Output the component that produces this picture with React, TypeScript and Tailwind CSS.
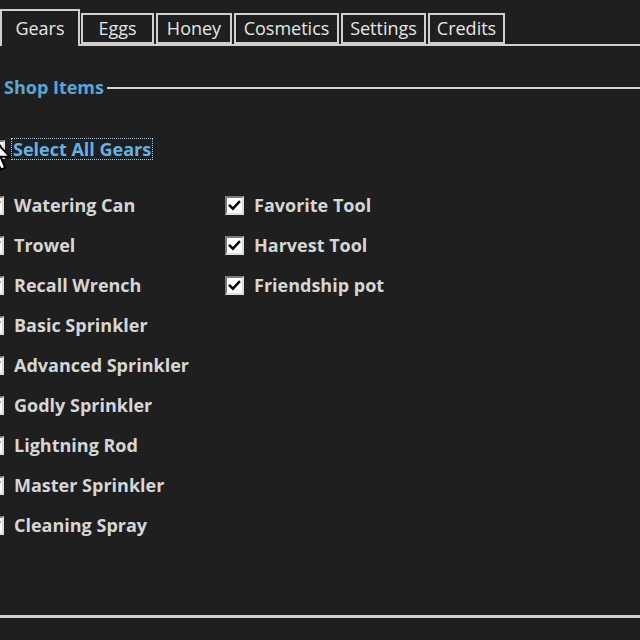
import type { ReactNode } from "react";

const TABS = [
  { label: "Eggs", width: "w-[73px]" },
  { label: "Honey", width: "w-[76px]" },
  { label: "Cosmetics", width: "w-[105px]" },
  { label: "Settings", width: "w-[85px]" },
  { label: "Credits", width: "w-[77px]" },
];

const LEFT_ITEMS = [
  "Watering Can",
  "Trowel",
  "Recall Wrench",
  "Basic Sprinkler",
  "Advanced Sprinkler",
  "Godly Sprinkler",
  "Lightning Rod",
  "Master Sprinkler",
  "Cleaning Spray",
];

const RIGHT_ITEMS = ["Favorite Tool", "Harvest Tool", "Friendship pot"];

function CheckBox() {
  return (
    <span className="flex h-[19px] w-[19px] shrink-0 items-center justify-center border-2 border-t-[#7a7a7a] border-l-[#7a7a7a] border-r-[#dcdcdc] border-b-[#dcdcdc] bg-white">
      <svg viewBox="0 0 14 14" className="h-[13px] w-[13px]">
        <path
          d="M2 7.2 L5.3 10.4 L12 3.2"
          fill="none"
          stroke="#000"
          strokeWidth="2.6"
          strokeLinecap="square"
        />
      </svg>
    </span>
  );
}

function CheckRow({ children }: { children: ReactNode }) {
  return (
    <label className="flex h-[40px] items-center gap-[10px]">
      <CheckBox />
      <span className="font-bold text-[18px] text-[#d6d6d6]">{children}</span>
    </label>
  );
}

function Cursor() {
  return (
    <svg
      viewBox="0 0 12 19"
      className="pointer-events-none absolute -left-[12px] top-[134px] h-[38px] w-[24px]"
    >
      <path
        d="M0.5 0.5 L0.5 15.5 L4 12.2 L6.4 17.8 L8.6 16.8 L6.3 11.4 L11 11.4 Z"
        fill="#fff"
        stroke="#000"
        strokeWidth="1"
        strokeLinejoin="miter"
      />
    </svg>
  );
}

export default function App() {
  return (
    <div
      className="relative h-[640px] w-[640px] overflow-hidden bg-[#1f1f1f]"
      style={{ fontFamily: '"Open Sans", "Noto Sans", sans-serif' }}
    >
      {/* tab strip */}
      <div className="flex h-[46px] items-end">
        <div className="flex h-[37px] w-[80px] items-start justify-center border-x-2 border-t-2 border-[#cfcfcf] pt-[4px] text-[18px] text-[#e6e6e6]">
          Gears
        </div>
        <div className="flex flex-1 items-end gap-[2px] border-b-2 border-[#cfcfcf] pl-[1px]">
          {TABS.map((tab) => (
            <div
              key={tab.label}
              className={`flex h-[31px] ${tab.width} items-center justify-center border-2 border-[#cfcfcf] text-[18px] text-[#e6e6e6]`}
            >
              {tab.label}
            </div>
          ))}
        </div>
      </div>

      {/* group box */}
      <div className="mt-[28px] flex h-[544px] flex-col border-b-[3px] border-[#cfcfcf]">
        <div className="flex items-center gap-[3px] pl-[4px]">
          <span className="font-bold text-[18px] text-[#5aa7d6]">
            Shop Items
          </span>
          <span className="h-[2px] flex-1 bg-[#d6d6d6]" />
        </div>

        <div className="-ml-[14px] mt-[28px] flex h-[40px] items-center gap-[6px]">
          <CheckBox />
          <span className="border border-dotted border-[#9ccbe8] px-px font-bold text-[18px] leading-[20px] text-[#66b1e2]">
            Select All Gears
          </span>
        </div>

        <div className="-ml-[15px] mt-[16px] flex">
          <div className="flex w-[240px] flex-col">
            {LEFT_ITEMS.map((item) => (
              <CheckRow key={item}>{item}</CheckRow>
            ))}
          </div>
          <div className="flex flex-col">
            {RIGHT_ITEMS.map((item) => (
              <CheckRow key={item}>{item}</CheckRow>
            ))}
          </div>
        </div>
      </div>

      <Cursor />
    </div>
  );
}
